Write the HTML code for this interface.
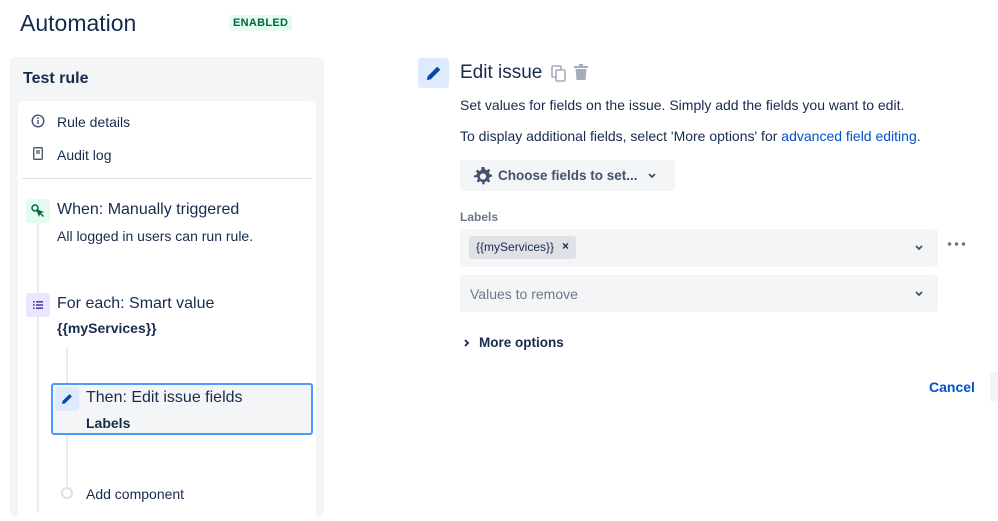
<!DOCTYPE html>
<html><head><style>
*{margin:0;padding:0;box-sizing:border-box}
body{width:998px;height:510px;overflow:hidden;background:#fff;font-family:"Liberation Sans",Arial,sans-serif;color:#172b4d;position:relative}
.a{position:absolute;white-space:nowrap}
</style></head><body>
<div class="a" style="left:20px;top:10px;font-size:23px;color:#172b4d">Automation</div>
<div class="a" style="left:229px;top:15px;background:#e3fcef;color:#006644;font-size:11px;font-weight:bold;padding:2px 4px;border-radius:3px;letter-spacing:.3px">ENABLED</div>

<div class="a" style="left:10px;top:57px;width:314px;height:460px;background:#f4f5f7;border-radius:6px"></div>
<div class="a" style="left:23px;top:70px;font-size:16px;font-weight:bold">Test rule</div>
<div class="a" style="left:18px;top:101px;width:298px;height:420px;background:#fff;border-radius:6px"></div>

<svg class="a" style="left:31px;top:114px" width="14" height="14" viewBox="0 0 14 14"><circle cx="7" cy="7" r="5.8" fill="none" stroke="#42526e" stroke-width="1.4"/><rect x="6.3" y="6" width="1.4" height="4" fill="#42526e"/><circle cx="7" cy="4.2" r=".9" fill="#42526e"/></svg>
<div class="a" style="left:57px;top:114px;font-size:14px">Rule details</div>
<svg class="a" style="left:33px;top:147px" width="10" height="13" viewBox="0 0 10 13"><rect x=".7" y=".7" width="8.6" height="11.6" rx="1" fill="none" stroke="#42526e" stroke-width="1.3"/><path d="M3 4h4M3 6h4" stroke="#42526e" stroke-width="1.2"/></svg>
<div class="a" style="left:57px;top:147px;font-size:14px">Audit log</div>
<div class="a" style="left:22px;top:178px;width:290px;height:1px;background:#dfe1e6"></div>

<div class="a" style="left:37px;top:222px;width:2px;height:290px;background:#ebecf0"></div>
<div class="a" style="left:26px;top:199px;width:24px;height:24px;background:#e3fcef;border-radius:3px"></div>
<svg class="a" style="left:30px;top:203px" width="16" height="16" viewBox="0 0 16 16"><circle cx="5" cy="5" r="3" fill="none" stroke="#006644" stroke-width="1.5"/><path d="M6 6l8 3-3 1 3 3-1 1-3-3-1 3z" fill="#006644"/></svg>
<div class="a" style="left:57px;top:201px;font-size:16px">When: Manually triggered</div>
<div class="a" style="left:57px;top:228px;font-size:14px">All logged in users can run rule.</div>

<div class="a" style="left:26px;top:293px;width:24px;height:24px;background:#eae6ff;border-radius:3px"></div>
<svg class="a" style="left:33px;top:300px" width="10" height="10" viewBox="0 0 10 10" fill="#5243aa"><rect x="0" y="1" width="1.6" height="1.6"/><rect x="3" y="1" width="7" height="1.6"/><rect x="0" y="4.2" width="1.6" height="1.6"/><rect x="3" y="4.2" width="7" height="1.6"/><rect x="0" y="7.4" width="1.6" height="1.6"/><rect x="3" y="7.4" width="7" height="1.6"/></svg>
<div class="a" style="left:57px;top:295px;font-size:16px">For each: Smart value</div>
<div class="a" style="left:57px;top:320px;font-size:14px;font-weight:bold">{{myServices}}</div>

<div class="a" style="left:66px;top:347px;width:2px;height:140px;background:#ebecf0"></div>
<div class="a" style="left:51px;top:383px;width:262px;height:52px;background:#f4f5f7;border:2px solid #4c9aff;border-radius:3px"></div>
<div class="a" style="left:55px;top:387px;width:24px;height:24px;background:#deebff;border-radius:3px"></div>
<svg class="a" style="left:60px;top:392px" width="14" height="14" viewBox="0 0 14 14"><path d="M2 12l.6-3L9.5 2.1l2.4 2.4L5 11.4z" fill="#0747a6"/></svg>
<div class="a" style="left:86px;top:389px;font-size:16px">Then: Edit issue fields</div>
<div class="a" style="left:86px;top:415px;font-size:14px;font-weight:bold">Labels</div>

<div class="a" style="left:61px;top:487px;width:12px;height:12px;border:2px solid #dfe1e6;border-radius:50%;background:#fff"></div>
<div class="a" style="left:86px;top:486px;font-size:14px">Add component</div>

<div class="a" style="left:418px;top:58px;width:31px;height:30px;background:#deebff;border-radius:3px"></div>
<svg class="a" style="left:425px;top:64px" width="18" height="18" viewBox="0 0 14 14"><path d="M1.5 12.5l.6-3L9.5 2.1l2.4 2.4L4.5 11.9z" fill="#0747a6"/></svg>
<div class="a" style="left:460px;top:62px;font-size:19px">Edit issue</div>
<svg class="a" style="left:551px;top:65px" width="16" height="17" viewBox="0 0 16 17"><rect x="1" y="1" width="9" height="11" rx="1" fill="none" stroke="#a5adba" stroke-width="1.6"/><rect x="5" y="5" width="9" height="11" rx="1" fill="#fff" stroke="#a5adba" stroke-width="1.6"/></svg>
<svg class="a" style="left:573px;top:64px" width="16" height="17" viewBox="0 0 16 17"><rect x="1" y="2" width="14" height="2" fill="#a5adba"/><rect x="6" y="0" width="4" height="2" fill="#a5adba"/><path d="M2.5 5h11l-1 11h-9z" fill="#a5adba"/></svg>
<div class="a" style="left:460px;top:97px;font-size:14px">Set values for fields on the issue. Simply add the fields you want to edit.</div>
<div class="a" style="left:460px;top:128px;font-size:14px">To display additional fields, select 'More options' for <span style="color:#0052cc">advanced field editing</span>.</div>

<div class="a" style="left:460px;top:160px;width:215px;height:31px;background:#f4f5f7;border-radius:3px"></div>
<svg class="a" style="left:473px;top:166px" width="19" height="19" viewBox="0 0 20 20"><path d="M10 1l2 0 .5 2.5 2 1 2.2-1.4 1.4 1.4-1.4 2.2 1 2 2.5.5v2l-2.5.5-1 2 1.4 2.2-1.4 1.4-2.2-1.4-2 1-.5 2.5h-2l-.5-2.5-2-1-2.2 1.4-1.4-1.4 1.4-2.2-1-2L1 12v-2l2.5-.5 1-2L3.1 5.3l1.4-1.4 2.2 1.4 2-1L9 1z" fill="#42526e"/><circle cx="10.5" cy="11" r="3.3" fill="#f4f5f7"/></svg>
<div class="a" style="left:498px;top:168px;font-size:13.5px;color:#42526e;font-weight:bold">Choose fields to set...</div>
<svg class="a" style="left:647px;top:172px" width="10" height="8" viewBox="0 0 10 8"><path d="M2 2l3 3 3-3" fill="none" stroke="#42526e" stroke-width="1.8"/></svg>

<div class="a" style="left:460px;top:210px;font-size:12px;color:#6b778c;font-weight:bold">Labels</div>
<div class="a" style="left:460px;top:229px;width:478px;height:38px;background:#f4f5f7;border-radius:3px"></div>
<div class="a" style="left:469px;top:236px;width:107px;height:23px;background:#dfe1e6;border-radius:3px"></div>
<div class="a" style="left:476px;top:240px;font-size:12px;color:#172b4d">{{myServices}}</div>
<div class="a" style="left:562px;top:239px;font-size:12px;font-weight:bold">×</div>
<svg class="a" style="left:914px;top:244px" width="10" height="8" viewBox="0 0 10 8"><path d="M2 2l3 3 3-3" fill="none" stroke="#42526e" stroke-width="1.8"/></svg>
<div class="a" style="left:946px;top:242px;width:20px;height:4px;background:radial-gradient(circle,#6b778c 1.6px,transparent 2px) 0 0/7px 4px"></div>

<div class="a" style="left:460px;top:275px;width:478px;height:37px;background:#f4f5f7;border-radius:3px"></div>
<div class="a" style="left:470px;top:286px;font-size:14px;color:#6b778c">Values to remove</div>
<svg class="a" style="left:914px;top:290px" width="10" height="8" viewBox="0 0 10 8"><path d="M2 2l3 3 3-3" fill="none" stroke="#42526e" stroke-width="1.8"/></svg>

<svg class="a" style="left:463px;top:338px" width="8" height="10" viewBox="0 0 8 10"><path d="M2 2l3 3-3 3" fill="none" stroke="#172b4d" stroke-width="1.8"/></svg>
<div class="a" style="left:479px;top:335px;font-size:13.5px;font-weight:bold">More options</div>
<div class="a" style="left:929px;top:379px;font-size:14px;font-weight:bold;color:#0052cc">Cancel</div>
<div class="a" style="left:990px;top:372px;width:10px;height:30px;background:#f4f5f7;border-radius:3px"></div>
</body></html>
